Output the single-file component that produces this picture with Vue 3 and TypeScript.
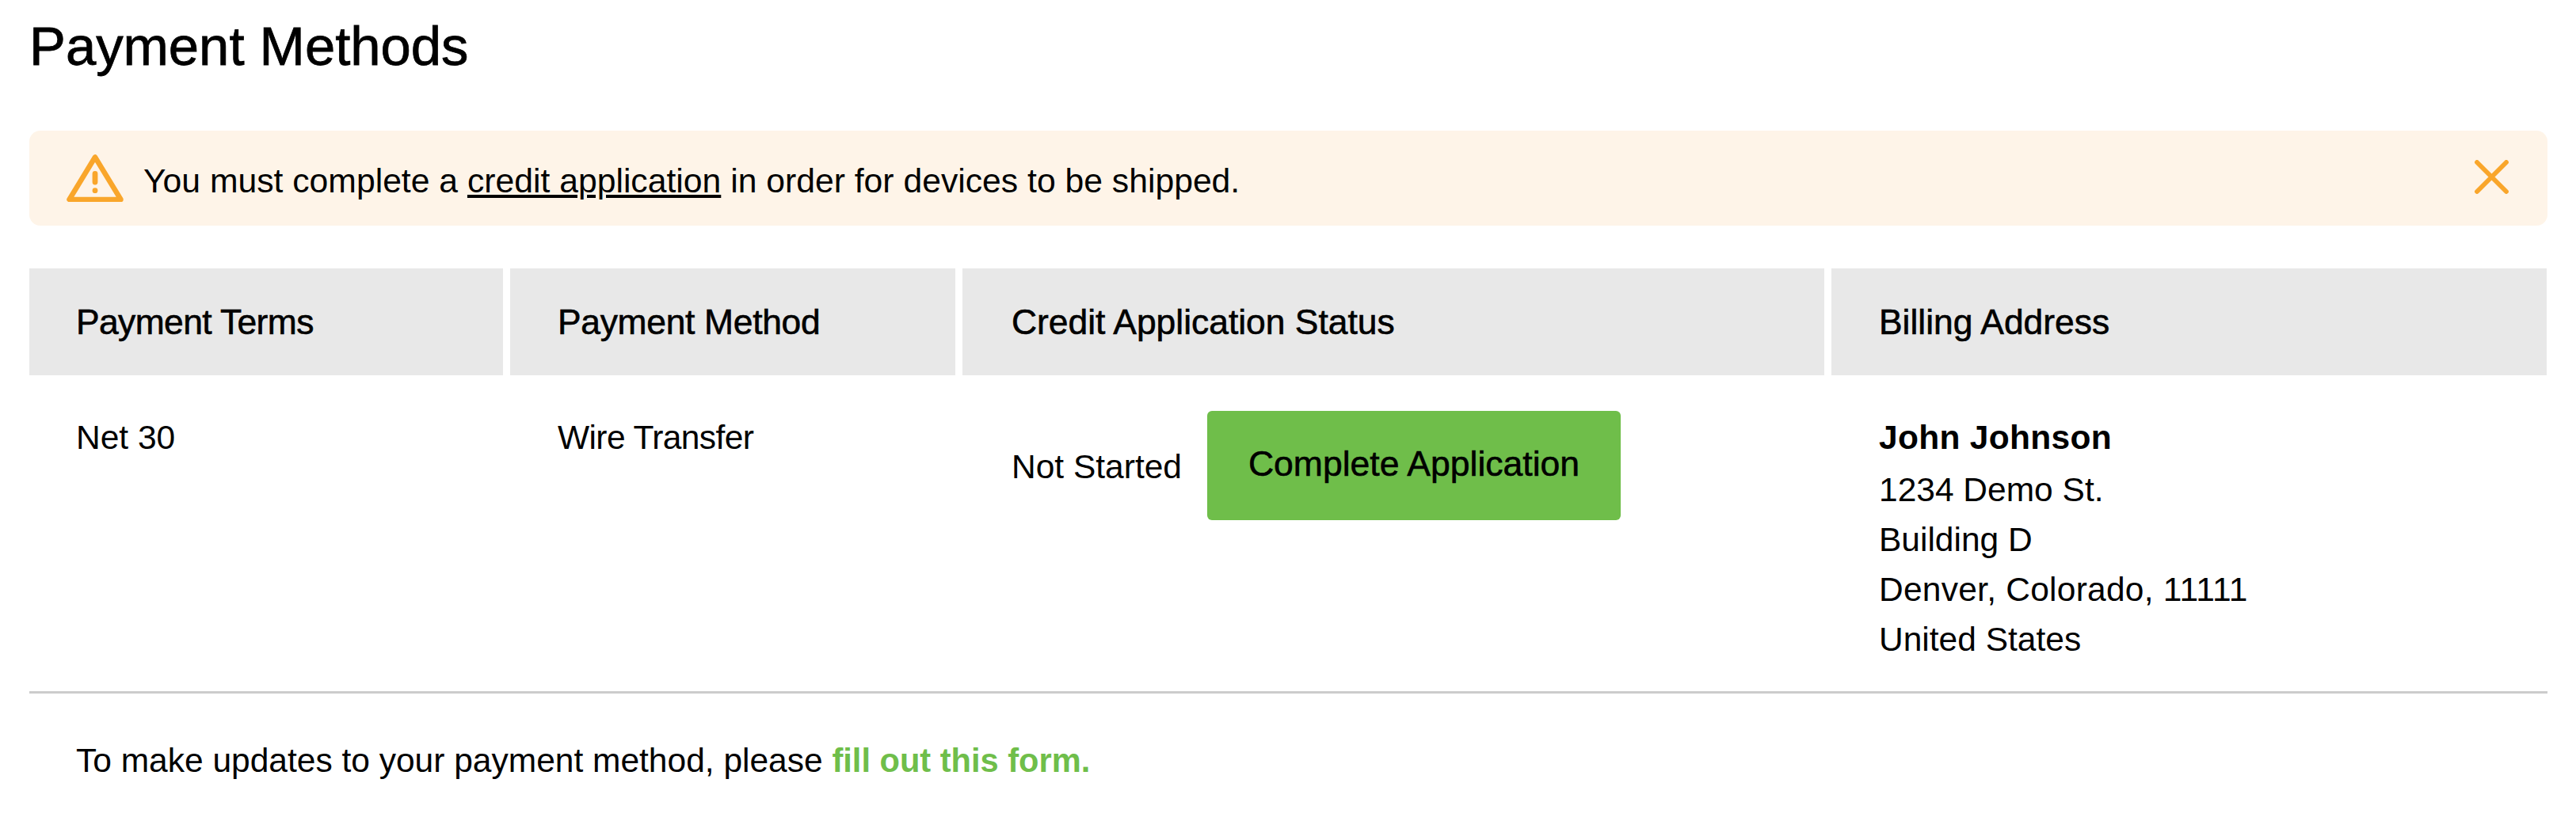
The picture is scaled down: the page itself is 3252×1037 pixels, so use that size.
<script setup lang="ts">
interface Col { label: string }
const cols: Col[] = [
  { label: 'Payment Terms' },
  { label: 'Payment Method' },
  { label: 'Credit Application Status' },
  { label: 'Billing Address' },
]
const address: string[] = ['1234 Demo St.', 'Building D', 'Denver, Colorado, 11111', 'United States']
</script>

<template>
  <main class="page">
    <h1 class="title">Payment Methods</h1>

    <div class="alert">
      <svg class="warn" viewBox="0 0 72 60" width="72" height="60" aria-hidden="true">
        <path d="M36 3.5 L3.5 57 H68.5 Z" fill="none" stroke="#f9a62b" stroke-width="6.5" stroke-linejoin="round" />
        <path d="M36 24.5 V35" fill="none" stroke="#f9a62b" stroke-width="6.8" stroke-linecap="round" />
        <circle cx="36" cy="45.7" r="3.4" fill="#f9a62b" />
      </svg>
      <p class="alert-text">You must complete a <a class="alert-link" href="#">credit application</a> in order for devices to be shipped.</p>
      <svg class="close" viewBox="0 0 43 43" width="43" height="43" aria-hidden="true">
        <path d="M3 3 L40 40 M40 3 L3 40" fill="none" stroke="#f9a62b" stroke-width="5.8" stroke-linecap="round" />
      </svg>
    </div>

    <div class="table">
      <div v-for="col in cols" :key="col.label" class="head">{{ col.label }}</div>
      <div class="cell">Net 30</div>
      <div class="cell">Wire Transfer</div>
      <div class="cell status">
        <span>Not Started</span>
        <button class="cta" type="button">Complete Application</button>
      </div>
      <div class="cell addr">
        <strong class="name">John Johnson</strong>
        <span v-for="line in address" :key="line" class="addr-line">{{ line }}</span>
      </div>
    </div>

    <p class="note">To make updates to your payment method, please <a class="note-link" href="#">fill out this form.</a></p>
  </main>
</template>

<style>
html, body { margin: 0; background: #fff; }
</style>

<style scoped>
.page {
  box-sizing: border-box;
  width: 3252px;
  height: 1037px;
  padding: 0 36px 0 37px;
  font-family: "Liberation Sans", Arial, sans-serif;
  font-size: 42.5px;
  color: #000;
  overflow: hidden;
}
.title {
  margin: 0;
  padding-top: 20px;
  height: 165px;
  box-sizing: border-box;
  font-size: 68.8px;
  line-height: 78px;
  font-weight: 400;
  -webkit-text-stroke: 0.8px #000;
}
.alert {
  box-sizing: border-box;
  height: 120px;
  display: flex;
  align-items: center;
  padding: 0 49px 0 47px;
  background: #fef4e8;
  border-radius: 14px;
}
.warn { flex: none; }
.alert-text {
  margin: 0 0 0 25px;
  padding-top: 6px;
  flex: 1;
  font-size: 42.7px;
  line-height: 50px;
}
.alert-link { color: #000; text-decoration: underline; }
.close { flex: none; margin-bottom: 3px; }
.table {
  margin-top: 54px;
  display: grid;
  grid-template-columns: 598px 562px 1088px 903px;
  column-gap: 9px;
  border-bottom: 3px solid #ccc;
}
.head {
  height: 135px;
  display: flex;
  align-items: center;
  padding-left: 60px;
  background: #e8e8e8;
  font-size: 44.4px;
  -webkit-text-stroke: 0.6px #000;
}
.head:nth-child(1) { padding-left: 59px; letter-spacing: -0.6px; }
.head:nth-child(2) { letter-spacing: -0.3px; }
.head:nth-child(3) { padding-left: 62px; }
.cell {
  padding: 54px 0 0 60px;
  line-height: 50px;
}
.cell:nth-child(5) { padding-left: 59px; }
.cell:nth-child(6) { letter-spacing: -0.6px; }
.status {
  display: flex;
  align-items: flex-start;
  padding-top: 45px;
  padding-left: 62px;
}
.status span { margin-top: 46px; }
.cta {
  margin-left: 32px;
  width: 522px;
  height: 138px;
  padding: 0 0 4px;
  border: 0;
  border-radius: 6px;
  background: #6fbe4a;
  color: #000;
  font-family: inherit;
  font-size: 44.5px;
  -webkit-text-stroke: 0.6px #000;
}
.addr { display: flex; flex-direction: column; padding-bottom: 34px; }
.name { font-size: 42.5px; line-height: 50px; letter-spacing: 0.3px; margin-bottom: 9px; }
.addr-line { line-height: 63px; }
.addr-line:nth-child(4) { letter-spacing: 0.25px; }
.note {
  margin: 0;
  padding: 60px 0 0 59px;
  line-height: 50px;
}
.note-link { color: #6fbe4a; font-weight: 700; font-size: 41.6px; text-decoration: none; }
</style>
